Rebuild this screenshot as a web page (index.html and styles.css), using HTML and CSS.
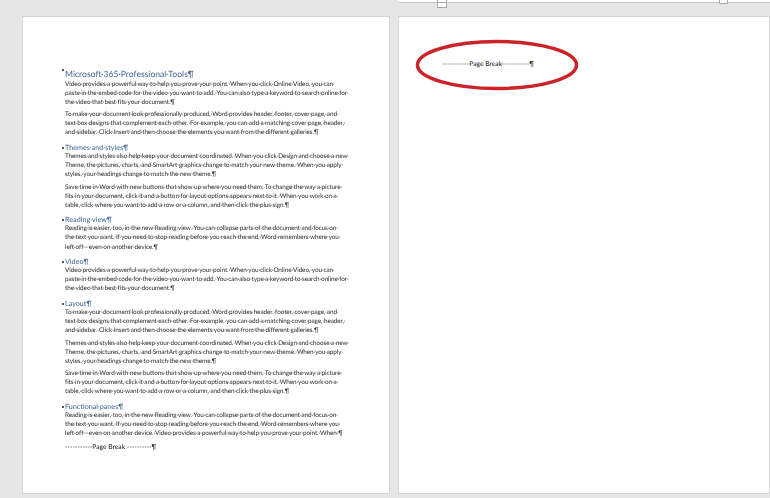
FILE: index.html
```html
<!DOCTYPE html>
<html lang="en">
<head>
  <meta charset="UTF-8">
  <meta name="viewport" content="width=device-width, initial-scale=1.0">
  <title>Page Break</title>
  <link rel="stylesheet" href="styles.css">
</head>
<body>

  <div class="page page-left">
    <h1 class="title">Microsoft·365·Professional·Tools¶</h1>
    <p>Video·provides·a·powerful·way·to·help·you·prove·your·point.·When·you·click·Online·Video,·you·can·<br>paste·in·the·embed·code·for·the·video·you·want·to·add.·You·can·also·type·a·keyword·to·search·online·for·<br>the·video·that·best·fits·your·document.¶</p>
    <p>To·make·your·document·look·professionally·produced,·Word·provides·header,·footer,·cover·page,·and·<br>text·box·designs·that·complement·each·other.·For·example,·you·can·add·a·matching·cover·page,·header,·<br>and·sidebar.·Click·Insert·and·then·choose·the·elements·you·want·from·the·different·galleries.¶</p>

    <h2>Themes·and·styles¶</h2>
    <p>Themes·and·styles·also·help·keep·your·document·coordinated.·When·you·click·Design·and·choose·a·new·<br>Theme,·the·pictures,·charts,·and·SmartArt·graphics·change·to·match·your·new·theme.·When·you·apply·<br>styles,·your·headings·change·to·match·the·new·theme.¶</p>
    <p>Save·time·in·Word·with·new·buttons·that·show·up·where·you·need·them.·To·change·the·way·a·picture·<br>fits·in·your·document,·click·it·and·a·button·for·layout·options·appears·next·to·it.·When·you·work·on·a·<br>table,·click·where·you·want·to·add·a·row·or·a·column,·and·then·click·the·plus·sign.¶</p>

    <h2>Reading·view¶</h2>
    <p>Reading·is·easier,·too,·in·the·new·Reading·view.·You·can·collapse·parts·of·the·document·and·focus·on·<br>the·text·you·want.·If·you·need·to·stop·reading·before·you·reach·the·end,·Word·remembers·where·you·<br>left·off·-·even·on·another·device.¶</p>

    <h2>Video¶</h2>
    <p>Video·provides·a·powerful·way·to·help·you·prove·your·point.·When·you·click·Online·Video,·you·can·<br>paste·in·the·embed·code·for·the·video·you·want·to·add.·You·can·also·type·a·keyword·to·search·online·for·<br>the·video·that·best·fits·your·document.¶</p>

    <h2>Layout¶</h2>
    <p>To·make·your·document·look·professionally·produced,·Word·provides·header,·footer,·cover·page,·and·<br>text·box·designs·that·complement·each·other.·For·example,·you·can·add·a·matching·cover·page,·header,·<br>and·sidebar.·Click·Insert·and·then·choose·the·elements·you·want·from·the·different·galleries.¶</p>
    <p>Themes·and·styles·also·help·keep·your·document·coordinated.·When·you·click·Design·and·choose·a·new·<br>Theme,·the·pictures,·charts,·and·SmartArt·graphics·change·to·match·your·new·theme.·When·you·apply·<br>styles,·your·headings·change·to·match·the·new·theme.¶</p>
    <p>Save·time·in·Word·with·new·buttons·that·show·up·where·you·need·them.·To·change·the·way·a·picture·<br>fits·in·your·document,·click·it·and·a·button·for·layout·options·appears·next·to·it.·When·you·work·on·a·<br>table,·click·where·you·want·to·add·a·row·or·a·column,·and·then·click·the·plus·sign.¶</p>

    <h2>Functional·panes¶</h2>
    <p>Reading·is·easier,·too,·in·the·new·Reading·view.·You·can·collapse·parts·of·the·document·and·focus·on·<br>the·text·you·want.·If·you·need·to·stop·reading·before·you·reach·the·end,·Word·remembers·where·you·<br>left·off·-·even·on·another·device.·Video·provides·a·powerful·way·to·help·you·prove·your·point.·When·¶</p>
    <div class="page-break">-----------Page Break ----------¶</div>
  </div>

  <div class="right-col">
    <div class="ruler">
      <span class="marker marker-left"></span>
      <span class="marker marker-right"></span>
    </div>
    <div class="page page-right">
      <div class="page-break-top">-----------Page Break-----------¶</div>
      <svg class="circle" width="166" height="54" viewBox="0 0 166 54">
        <ellipse cx="83" cy="27" rx="79.5" ry="23.5" fill="none" stroke="#cc2229" stroke-width="3.5"/>
      </svg>
    </div>
  </div>

</body>
</html>
```

FILE: styles.css
```css
html, body {
  margin: 0;
  height: 100%;
}
body {
  background-color: #e6e6e6;
  font-family: Lato, "Open Sans", sans-serif;
  color: #2b2b2b;
  text-rendering: geometricPrecision;
  width: 770px;
  height: 498px;
  overflow: hidden;
  display: flex;
  align-items: flex-start;
  gap: 8px;
  padding-left: 22px;
  box-sizing: border-box;
}
.page {
  background-color: #ffffff;
  border: 1px solid #d4d4d4;
  box-sizing: border-box;
  position: relative;
}
.page-left {
  width: 368px;
  height: 478px;
  margin-top: 16px;
  padding: 50.5px 0 0 42px;
  filter: blur(0.25px);
}
.right-col {
  flex: 1;
  display: flex;
  flex-direction: column;
}
.ruler {
  height: 2px;
  background-color: #ffffff;
  border-bottom: 1px solid #c4c4c4;
  position: relative;
}
.marker {
  position: absolute;
  top: -2px;
  height: 6px;
  background-color: #ffffff;
  border: 1px solid #a8a8a8;
  box-sizing: border-box;
}
.marker-left {
  left: 39px;
  width: 10px;
  height: 10px;
}
.marker-left::after {
  content: "";
  display: block;
  height: 3px;
  border-bottom: 1px solid #a8a8a8;
}
.marker-right {
  left: 321px;
  width: 9px;
}
.page-right {
  height: 478px;
  margin-top: 13px;
}
p {
  margin: 0 0 3.6px 0;
  font-size: 6.4px;
  letter-spacing: -0.1px;
  line-height: 9.05px;
  white-space: nowrap;
}
h1, h2 {
  margin: 0;
  font-weight: normal;
  color: #3f6592;
  position: relative;
  white-space: nowrap;
}
h1::before, h2::before {
  content: "";
  position: absolute;
  left: -3px;
  width: 2px;
  height: 2px;
  border-radius: 50%;
  background-color: #222;
}
h1 {
  font-size: 8.6px;
  line-height: 12px;
}
h1::before {
  top: 1px;
}
h2 {
  font-size: 7.2px;
  line-height: 9px;
  margin-top: 5.6px;
}
h2::before {
  top: 4px;
}
.page-break {
  font-size: 6.7px;
  line-height: 10px;
  color: #111;
  margin-top: 4px;
  white-space: nowrap;
}
.page-break-top {
  position: absolute;
  left: 43px;
  top: 43px;
  font-size: 6.7px;
  line-height: 9px;
  color: #111;
  white-space: nowrap;
}
.circle {
  position: absolute;
  left: 15px;
  top: 21px;
}
```
